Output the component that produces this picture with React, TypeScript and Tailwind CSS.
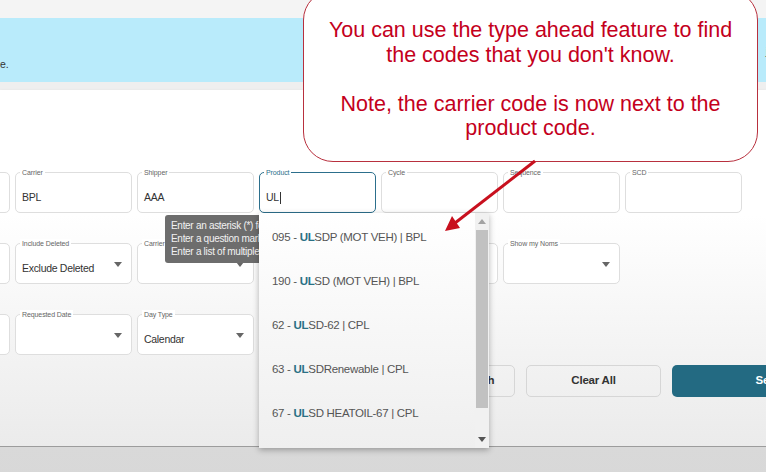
import React from 'react'

type Field = {
  label?: string
  value?: string
  select?: boolean
  focused?: boolean
}

const rows: Field[][] = [
  [
    {},
    { label: 'Carrier', value: 'BPL' },
    { label: 'Shipper', value: 'AAA' },
    { label: 'Product', value: 'UL', focused: true },
    { label: 'Cycle' },
    { label: 'Sequence' },
    { label: 'SCD' },
  ],
  [
    { select: true },
    { label: 'Include Deleted', value: 'Exclude Deleted', select: true },
    { label: 'Carrier Contact Status', select: true },
    { label: 'Tank', select: true },
    { label: 'Batch Status', select: true },
    { label: 'Show my Noms', select: true },
  ],
  [
    { select: true },
    { label: 'Requested Date', select: true },
    { label: 'Day Type', value: 'Calendar', select: true },
  ],
]

const options = [
  { code: '095', rest: 'SDP (MOT VEH) | BPL' },
  { code: '190', rest: 'SD (MOT VEH) | BPL' },
  { code: '62', rest: 'SD-62 | CPL' },
  { code: '63', rest: 'SDRenewable | CPL' },
  { code: '67', rest: 'SD HEATOIL-67 | CPL' },
]

function FormField({ f }: { f: Field }) {
  return (
    <div
      className={`relative h-[41px] w-[117px] shrink-0 rounded-[5px] bg-white px-[6px] pt-[16px] ${
        f.focused ? 'border-[1.5px] border-[#2c6f8c]' : 'border border-[#dedede]'
      }`}
    >
      {f.label && (
        <span
          className={`absolute left-[4px] top-[-5px] bg-white px-[2px] text-[7px] leading-[9px] tracking-[-0.1px] ${
            f.focused ? 'text-[#2c6f8c]' : 'text-[#666]'
          }`}
        >
          {f.label}
        </span>
      )}
      <div className="h-[16px] text-[10.5px] leading-[16px] tracking-[-0.3px] text-[#333]">
        {f.value}
        {f.focused && <span className="ml-[1px] inline-block h-[12px] w-px bg-[#333] align-middle" />}
      </div>
      {f.select && (
        <span className="absolute right-[9px] top-[18px] h-0 w-0 border-x-[4px] border-t-[5px] border-x-transparent border-t-[#666]" />
      )}
    </div>
  )
}

export default function App() {
  return (
    <div className="relative h-[472px] w-[766px] overflow-hidden bg-[#d2d2d2] font-['Liberation_Sans',Arial,sans-serif]">
      <div className="h-[18px] bg-[#f4f4f4]" />
      <div className="flex h-[64px] justify-between bg-[#b9ebfb] text-[10.5px] text-[#333]">
        <span className="mt-[39px]">e.</span>
        <span className="mr-[-8px] mt-[26px]">ja</span>
      </div>
      <div className="h-[8px] bg-[#efefef]" />

      <div className="h-[357px] border-b border-[#9c9c9c] bg-linear-to-b from-white from-35% to-[#ebebeb] pt-[82px] shadow-[0_2px_4px_rgba(0,0,0,0.15)]">
        <div className="flex flex-col gap-[30px]">
          {rows.map((row, i) => (
            <div key={i} className="ml-[-107px] flex gap-[5px]">
              {row.map((f, j) => (
                <FormField key={j} f={f} />
              ))}
            </div>
          ))}
        </div>
        <div className="ml-[380px] mt-[10px] flex gap-[11px] text-[11.5px] font-bold tracking-[-0.2px]">
          <button className="h-[32px] w-[135px] shrink-0 rounded-[5px] border border-[#d6d6d6] text-[#333]">
            Advanced Search
          </button>
          <button className="h-[32px] w-[135px] shrink-0 rounded-[5px] border border-[#d6d6d6] text-[#333]">
            Clear All
          </button>
          <button className="h-[32px] w-[204px] shrink-0 rounded-[5px] bg-[#236a82] text-white">
            Search
          </button>
        </div>
      </div>
      <div className="h-full bg-linear-to-b from-[#d9d9d9] to-[#cbcbcb]" />

      {/* tooltip */}
      <div className="absolute left-[165px] top-[215px] h-[48px] w-[200px] overflow-hidden whitespace-nowrap rounded-[3px] bg-[#6d6d6d] px-[6px] py-[4px] text-[10px] leading-[13px] tracking-[-0.3px] text-[#f2f2f2]">
        <div>Enter an asterisk (*) for wildcard search</div>
        <div>Enter a question mark (?) for a single character</div>
        <div>Enter a list of multiple values separated by commas</div>
      </div>

      {/* typeahead dropdown */}
      <div className="absolute left-[259px] top-[213px] flex h-[235px] w-[230px] bg-linear-to-b from-white to-[#efefef] shadow-[0_2px_6px_rgba(0,0,0,0.3)]">
        <ul className="flex-1 pt-[2px] text-[11.5px] tracking-[-0.3px] text-[#555]">
          {options.map((o) => (
            <li key={o.code} className="h-[44px] whitespace-nowrap pl-[13px] leading-[44px]">
              {o.code} - <span className="font-bold text-[#2a7085]">UL</span>
              {o.rest}
            </li>
          ))}
        </ul>
        <div className="flex w-[14px] flex-col bg-[#f1f1f1]">
          <div className="flex h-[17px] items-center justify-center">
            <span className="h-0 w-0 border-x-[4px] border-b-[5px] border-x-transparent border-b-[#a3a3a3]" />
          </div>
          <div className="mx-[1px] h-[178px] bg-[#c1c1c1]" />
          <div className="flex-1" />
          <div className="flex h-[17px] items-center justify-center">
            <span className="h-0 w-0 border-x-[4px] border-t-[5px] border-x-transparent border-t-[#555]" />
          </div>
        </div>
      </div>

      {/* callout */}
      <div className="absolute left-[303px] top-[-10px] h-[172px] w-[455px] rounded-[30px] border-[1.5px] border-[#b8303e] bg-white pt-[27px] text-center text-[21.5px] leading-[24.5px] text-[#c4001c]">
        <p>You can use the type ahead feature to find</p>
        <p>the codes that you don't know.</p>
        <p className="h-[24.5px]" />
        <p>Note, the carrier code is now next to the</p>
        <p>product code.</p>
      </div>

      {/* pointer arrow */}
      <svg className="absolute left-0 top-0" width="766" height="472" viewBox="0 0 766 472" fill="none">
        <line x1="535" y1="161" x2="455" y2="223" stroke="#c8101e" strokeWidth="3" />
        <polygon points="445,231 460,228 452,216" fill="#c8101e" />
      </svg>
    </div>
  )
}
